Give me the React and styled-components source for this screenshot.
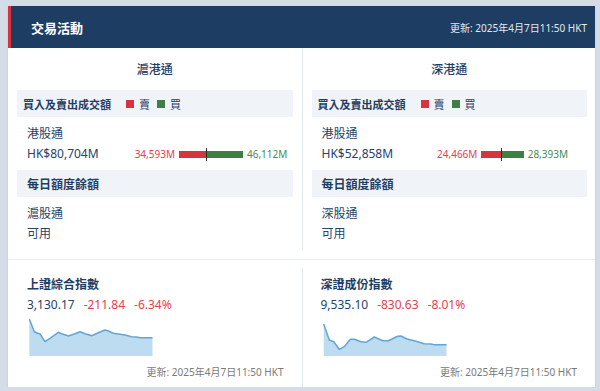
import styled, { createGlobalStyle } from 'styled-components';

const GlobalStyle = createGlobalStyle`
	html, body {
		margin: 0;
		background: #d4dde7;
	}
	body {
		font-family: "Noto Sans", "Noto Sans CJK TC", sans-serif;
		color: #1f3d63;
	}
	#root {
		padding: 6px 5px 0 8px;
	}
`;

const NAVY = '#1f3d63';
const RED = '#d8343f';
const GREEN = '#3e7f43';
const UPDATED = '更新: 2025年4月7日11:50 HKT';

const connect = [
	{
		title: '滬港通',
		amount: 'HK$80,704M',
		sell: 34593,
		buy: 46112,
		quota: '滬股通',
	},
	{
		title: '深港通',
		amount: 'HK$52,858M',
		sell: 24466,
		buy: 28393,
		quota: '深股通',
	},
];

const indices = [
	{
		name: '上證綜合指數',
		value: '3,130.17',
		change: '-211.84',
		pct: '-6.34%',
		points:
			'0.3,1 5.3,13.7 8.7,15.3 11,16 16,23.7 21,20.3 29.3,14.3 32.7,15.7 39.3,18 46,15.7 51,13.7 56,15.7 62.7,17.7 69.3,14.7 76,12 79.3,13 84.3,15.3 91,16.3 96,17 102.7,18.7 107.7,19 111,19.7 123.5,19.7',
	},
	{
		name: '深證成份指數',
		value: '9,535.10',
		change: '-830.63',
		pct: '-8.01%',
		points:
			'0.7,6 6.3,22 10.7,23.7 16.3,31.3 21.3,28.7 27.3,21.3 31.3,21.3 38,23.7 43,24.3 51.3,19 59.7,22.7 65.3,22.7 74.7,18.3 78,18 84,21 91.3,22.7 101.3,25.7 108,26 111.3,26.7 123.5,26.7',
	},
];

// bar px per million, largest side = 36px
const SCALE = 36 / 46112;

const Chart = ({ points }) => {
	const first = points.split(' ')[0].split(',')[0];
	const last = points.split(' ').slice(-1)[0].split(',')[0];
	return (
		<ChartSvg width="124" height="38" viewBox="0 0 124 38">
			<polygon points={`${first},38 ${points} ${last},38`} fill="#bedcf0" />
			<polyline points={points} fill="none" stroke="#62a6d9" strokeWidth="1.5" strokeLinejoin="round" />
		</ChartSvg>
	);
};

const App = () => (
	<>
		<GlobalStyle />
		<Card>
			<Header>
				<h2>交易活動</h2>
				<span>{UPDATED}</span>
			</Header>

			<Section>
				{connect.map((c) => (
					<Column key={c.title}>
						<ColumnTitle>{c.title}</ColumnTitle>
						<GreyRow $small>
							買入及賣出成交額
							<Legend>
								<Swatch $color={RED} />
								賣
							</Legend>
							<Legend>
								<Swatch $color={GREEN} />
								買
							</Legend>
						</GreyRow>
						<Block>
							<div>港股通</div>
							<BarRow>
								<Amount>{c.amount}</Amount>
								<SellSide>
									<Value $color="#e0424f">{c.sell.toLocaleString('en-US')}M</Value>
									<Bar $color={RED} $w={c.sell * SCALE} />
								</SellSide>
								<Tick />
								<BuySide>
									<Bar $color={GREEN} $w={c.buy * SCALE} />
									<Value $color="#4a8a4f">{c.buy.toLocaleString('en-US')}M</Value>
								</BuySide>
							</BarRow>
						</Block>
						<GreyRow>每日額度餘額</GreyRow>
						<Block>
							<div>{c.quota}</div>
							<div>可用</div>
						</Block>
					</Column>
				))}
			</Section>

			<IndexSection>
				{indices.map((i) => (
					<IndexColumn key={i.name}>
						<IndexName>{i.name}</IndexName>
						<Quote>
							<span>{i.value}</span>
							<Down>{i.change}</Down>
							<Down>{i.pct}</Down>
						</Quote>
						<Chart points={i.points} />
						<Updated>{UPDATED}</Updated>
					</IndexColumn>
				))}
			</IndexSection>
		</Card>
	</>
);

const Card = styled.div`
	width: 587px;
	background: #fff;
	box-shadow: 0 1px 2px rgba(30, 61, 99, 0.12);
`;

const Header = styled.div`
	box-sizing: border-box;
	height: 42px;
	display: flex;
	align-items: center;
	justify-content: space-between;
	padding: 0 8px 0 20px;
	background: #1e3d63;
	border-left: 3px solid ${RED};
	h2 {
		margin: 0;
		font-size: 13px;
		font-weight: 700;
		color: #fff;
	}
	span {
		font-size: 10px;
		color: #e3e8ef;
	}
`;

const Section = styled.div`
	display: grid;
	grid-template-columns: minmax(0, 1fr) minmax(0, 1fr);
	padding-bottom: 9px;
	border-bottom: 1px solid #e9eef3;
`;

const Column = styled.div`
	min-width: 0;
	padding: 0 9px;
	& + & {
		border-left: 1px solid #e4e9ef;
		padding: 0 8px 0 9px;
	}
`;

const ColumnTitle = styled.div`
	height: 42px;
	display: flex;
	align-items: center;
	justify-content: center;
	font-size: 12px;
	font-weight: 500;
`;

const GreyRow = styled.div`
	height: 27px;
	display: flex;
	align-items: center;
	gap: 7px;
	padding-left: ${(p) => (p.$small ? '6px' : '10px')};
	background: #f0f4f8;
	font-size: ${(p) => (p.$small ? '11px' : '12px')};
	font-weight: 700;
	color: ${NAVY};
	& > :first-of-type {
		margin-left: 8px;
	}
`;

const Legend = styled.span`
	display: flex;
	align-items: center;
	gap: 5px;
	font-weight: 400;
`;

const Swatch = styled.i`
	display: block;
	width: 8px;
	height: 8px;
	background: ${(p) => p.$color};
`;

const Block = styled.div`
	height: 53px;
	box-sizing: border-box;
	padding: 7px 0 0 10px;
	font-size: 12px;
	line-height: 20px;
	color: #264368;
`;

const BarRow = styled.div`
	display: flex;
	align-items: center;
	height: 20px;
	white-space: nowrap;
`;

const Amount = styled.div`
	flex: none;
	width: 80px;
`;

const SellSide = styled.div`
	flex: none;
	width: 99px;
	display: flex;
	align-items: center;
	justify-content: flex-end;
	gap: 4px;
`;

const BuySide = styled.div`
	flex: none;
	display: flex;
	align-items: center;
	gap: 4px;
`;

const Value = styled.span`
	font-size: 10px;
	color: ${(p) => p.$color};
`;

const Bar = styled.span`
	display: block;
	width: ${(p) => p.$w}px;
	height: 7px;
	background: ${(p) => p.$color};
`;

const Tick = styled.span`
	flex: none;
	display: block;
	width: 1px;
	height: 13px;
	background: #2b2b2b;
`;

const IndexSection = styled.div`
	display: grid;
	grid-template-columns: minmax(0, 1fr) minmax(0, 1fr);
	padding-top: 8px;
`;

const IndexColumn = styled.div`
	display: flex;
	flex-direction: column;
	padding: 7px 18px 5px 19px;
	& + & {
		border-left: 1px solid #e4e9ef;
		padding-left: 18px;
	}
`;

const IndexName = styled.div`
	font-size: 12px;
	font-weight: 700;
	line-height: 20px;
`;

const Quote = styled.div`
	display: flex;
	gap: 9px;
	font-size: 12px;
	line-height: 20px;
	color: #264368;
`;

const Down = styled.span`
	color: #e0424f;
`;

const ChartSvg = styled.svg`
	display: block;
	margin: 3px 0 0 2px;
`;

const Updated = styled.div`
	margin-top: 6px;
	align-self: flex-end;
	font-size: 10px;
	line-height: 20px;
	color: #7a7a7a;
`;

export default App;
